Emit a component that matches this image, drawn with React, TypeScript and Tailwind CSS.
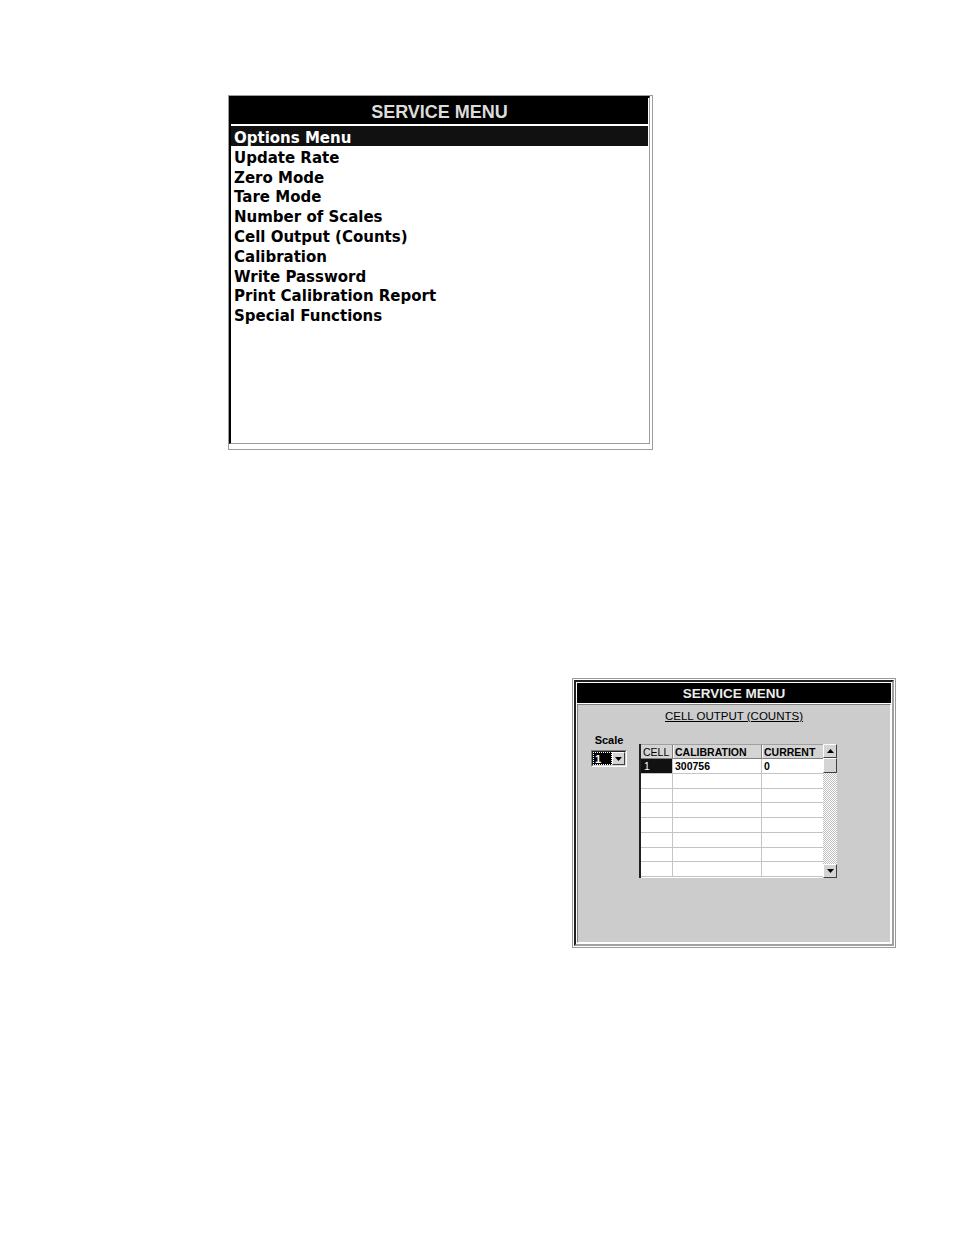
import React from "react";

const items = [
  "Options Menu",
  "Update Rate",
  "Zero Mode",
  "Tare Mode",
  "Number of Scales",
  "Cell Output (Counts)",
  "Calibration",
  "Write Password",
  "Print Calibration Report",
  "Special Functions",
];

function Tri({ up }: { up?: boolean }) {
  return (
    <svg width="7" height="4" viewBox="0 0 7 4">
      {up ? <polygon points="0,4 7,4 3.5,0" fill="#000" /> : <polygon points="0,0 7,0 3.5,4" fill="#000" />}
    </svg>
  );
}

function RaisedBtn({ children, className }: { children?: React.ReactNode; className: string }) {
  return (
    <div className={"bg-[#d4d4d4] border border-t-white border-l-white border-r-[#404040] border-b-[#404040] flex items-center justify-center " + className}>
      {children}
    </div>
  );
}

export default function App() {
  const rows = [0, 1, 2, 3, 4, 5, 6, 7];
  return (
    <div className="w-[954px] h-[1235px] bg-white overflow-hidden pt-[95px] font-['Liberation_Sans',Arial,sans-serif]">
      {/* Panel 1 */}
      <div className="ml-[228px] w-[425px] h-[355px] border border-[#9c9c9c] bg-white pr-[2px] pb-[5px]">
        <div className="h-full border-l-2 border-t-2 border-l-black border-t-black border-r border-b border-r-[#9c9c9c] border-b-[#9c9c9c] pr-px flex flex-col">
          <div className="h-[26px] bg-black flex items-center justify-center text-[#dcdcdc] font-bold text-[18px] leading-none pt-[1px]">
            SERVICE MENU
          </div>
          <div className="pt-[2px] font-['DejaVu_Sans',Verdana,sans-serif] font-bold text-[15px]">
            {items.map((t, i) => (
              <div
                key={t}
                className={
                  i === 0
                    ? "h-[19.8px] leading-[19.8px] pt-[3px] pl-[3px] bg-[#111111] text-white"
                    : "h-[19.8px] leading-[19.8px] pt-[3px] pl-[3px] text-black"
                }
              >
                {t}
              </div>
            ))}
          </div>
        </div>
      </div>

      {/* Panel 2 */}
      <div className="mt-[228px] ml-[572px] w-[324px] h-[270px] border border-[#999999] bg-white p-px">
        <div className="h-full border-2 border-t-[#202020] border-l-[#202020] border-r-[#a0a0a0] border-b-[#a0a0a0] p-px flex flex-col">
          <div className="h-[20px] bg-black flex items-center justify-center text-[#ececec] font-bold text-[13.5px] leading-none pt-[1px]">
            SERVICE MENU
          </div>
          <div className="mt-px flex-1 bg-[#cccccc] border border-t-[#808080] border-l-[#808080] border-r-white border-b-white flex flex-col">
            <div className="pt-[4px] h-[17px] text-center text-[11.5px] leading-[14px] underline text-black">
              CELL OUTPUT (COUNTS)
            </div>
            <div className="mt-[10px] flex">
              {/* scale selector */}
              <div className="ml-[13px] w-[36px] flex flex-col">
                <div className="h-[14px] pt-px text-center text-[11px] font-bold leading-[14px] text-black">Scale</div>
                <div className="mt-[4px] h-[17px] w-[36px] border border-t-[#808080] border-l-[#808080] border-r-white border-b-white">
                  <div className="h-full flex border border-t-[#202020] border-l-[#202020] border-r-[#d4d4d4] border-b-[#d4d4d4] bg-white">
                    <div className="w-[19px] h-full bg-black border border-dotted border-white text-white text-[11px] font-bold leading-[12px] pl-px">
                      1
                    </div>
                    <RaisedBtn className="flex-1 h-full">
                      <Tri />
                    </RaisedBtn>
                  </div>
                </div>
              </div>
              {/* table */}
              <div className="ml-[12px] mt-[12px] w-[198px] h-[134px] flex bg-white">
                <div className="w-[184px] h-full border-l-2 border-l-[#202020] flex flex-col overflow-hidden">
                  <div className="h-[15px] flex bg-[#d4d4d4] border-t border-t-[#a0a0a0] border-b border-b-[#808080] text-[10.5px] leading-[14px] text-black">
                    <div className="w-[32px] border-r border-r-[#808080] pl-[2px] text-black">CELL</div>
                    <div className="w-[89px] border-r border-r-[#808080] border-l border-l-white pl-[1px] font-bold">CALIBRATION</div>
                    <div className="w-[61px] border-l border-l-white pl-[1px] font-bold">CURRENT</div>
                  </div>
                  {rows.map((r) => (
                    <div key={r} className="h-[14.75px] shrink-0 flex border-b border-b-[#c4c4c4] text-[10.5px] leading-[15px]">
                      <div
                        className={
                          r === 0
                            ? "w-[32px] border-r border-r-[#c4c4c4] bg-[#111111] text-white pl-[3px]"
                            : "w-[32px] border-r border-r-[#c4c4c4]"
                        }
                      >
                        {r === 0 ? "1" : ""}
                      </div>
                      <div className="w-[89px] border-r border-r-[#c4c4c4] pl-[2px] font-bold text-black">
                        {r === 0 ? "300756" : ""}
                      </div>
                      <div className="w-[61px] pl-[2px] font-bold text-black">{r === 0 ? "0" : ""}</div>
                    </div>
                  ))}
                </div>
                {/* scrollbar */}
                <div className="w-[14px] h-full flex flex-col bg-[image:repeating-conic-gradient(#c0c0c0_0%_25%,#ffffff_0%_50%)] bg-[length:2px_2px]">
                  <RaisedBtn className="h-[14px] w-full">
                    <Tri up />
                  </RaisedBtn>
                  <RaisedBtn className="h-[15px] w-full" />
                  <div className="flex-1" />
                  <RaisedBtn className="h-[14px] w-full">
                    <Tri />
                  </RaisedBtn>
                </div>
              </div>
            </div>
          </div>
        </div>
      </div>
    </div>
  );
}
